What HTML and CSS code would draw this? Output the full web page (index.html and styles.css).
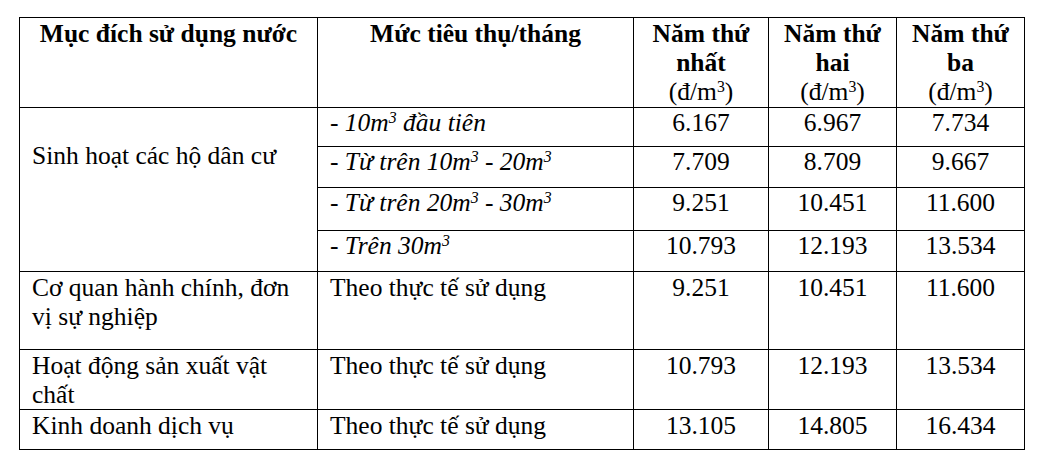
FILE: index.html
```html
<!DOCTYPE html>
<html lang="vi">
<head>
<meta charset="utf-8">
<title>Bảng giá nước</title>
<link rel="stylesheet" href="styles.css">
</head>
<body>
<table class="tariff">
  <colgroup>
    <col class="c-purpose">
    <col class="c-level">
    <col class="c-year">
    <col class="c-year2">
    <col class="c-year3">
  </colgroup>
  <tr class="r-head">
    <th>Mục đích sử dụng nước</th>
    <th>Mức tiêu thụ/tháng</th>
    <th>Năm thứ<br>nhất<br><span class="unit">(đ/m<sup>3</sup>)</span></th>
    <th>Năm thứ<br>hai<br><span class="unit">(đ/m<sup>3</sup>)</span></th>
    <th>Năm thứ<br>ba<br><span class="unit">(đ/m<sup>3</sup>)</span></th>
  </tr>
  <tr class="r-a">
    <td rowspan="4" class="purpose household">Sinh hoạt các hộ dân cư</td>
    <td class="level tier">- 10m<sup>3</sup> đầu tiên</td>
    <td class="num">6.167</td>
    <td class="num">6.967</td>
    <td class="num">7.734</td>
  </tr>
  <tr class="r-b">
    <td class="level tier">- Từ trên 10m<sup>3</sup> - 20m<sup>3</sup></td>
    <td class="num">7.709</td>
    <td class="num">8.709</td>
    <td class="num">9.667</td>
  </tr>
  <tr class="r-c">
    <td class="level tier">- Từ trên 20m<sup>3</sup> - 30m<sup>3</sup></td>
    <td class="num">9.251</td>
    <td class="num">10.451</td>
    <td class="num">11.600</td>
  </tr>
  <tr class="r-d">
    <td class="level tier">- Trên 30m<sup>3</sup></td>
    <td class="num">10.793</td>
    <td class="num">12.193</td>
    <td class="num">13.534</td>
  </tr>
  <tr class="r-e">
    <td class="purpose">Cơ quan hành chính, đơn vị sự nghiệp</td>
    <td class="level">Theo thực tế sử dụng</td>
    <td class="num">9.251</td>
    <td class="num">10.451</td>
    <td class="num">11.600</td>
  </tr>
  <tr class="r-f">
    <td class="purpose">Hoạt động sản xuất vật chất</td>
    <td class="level">Theo thực tế sử dụng</td>
    <td class="num">10.793</td>
    <td class="num">12.193</td>
    <td class="num">13.534</td>
  </tr>
  <tr class="r-g">
    <td class="purpose">Kinh doanh dịch vụ</td>
    <td class="level">Theo thực tế sử dụng</td>
    <td class="num">13.105</td>
    <td class="num">14.805</td>
    <td class="num">16.434</td>
  </tr>
</table>
</body>
</html>
```

FILE: styles.css
```css
html, body {
  margin: 0;
  padding: 0;
  background: #ffffff;
}

body {
  font-family: "Liberation Serif", "Times New Roman", serif;
  font-size: 25.5px;
  line-height: 29px;
  color: #000000;
}

.tariff {
  margin: 17px 0 0 19px;
  border-collapse: collapse;
  table-layout: fixed;
  width: 1005px;
}

.c-purpose { width: 298px; }
.c-level { width: 316px; }
.c-year { width: 135px; }
.c-year2 { width: 128px; }
.c-year3 { width: 128px; }

.tariff th,
.tariff td {
  border: 1px solid #000000;
  padding: 0 12px;
  vertical-align: top;
}

.tariff th {
  font-weight: bold;
  text-align: center;
  padding-top: 1px;
}

.unit {
  font-weight: normal;
}

sup {
  font-size: 0.62em;
  line-height: 0;
  vertical-align: 0.5em;
}

.purpose,
.level {
  text-align: left;
}

.tier {
  font-style: italic;
}

.tariff td.household {
  padding-top: 33px;
}

.num {
  text-align: center;
}

.r-head { height: 90px; }
.r-a { height: 39px; }
.r-b { height: 41px; }
.r-c { height: 43px; }
.r-d { height: 41px; }
.r-e { height: 78px; }
.r-f { height: 59px; }
.r-g { height: 40px; }

.r-e td,
.r-f td,
.r-g td {
  padding-top: 1px;
}
```
